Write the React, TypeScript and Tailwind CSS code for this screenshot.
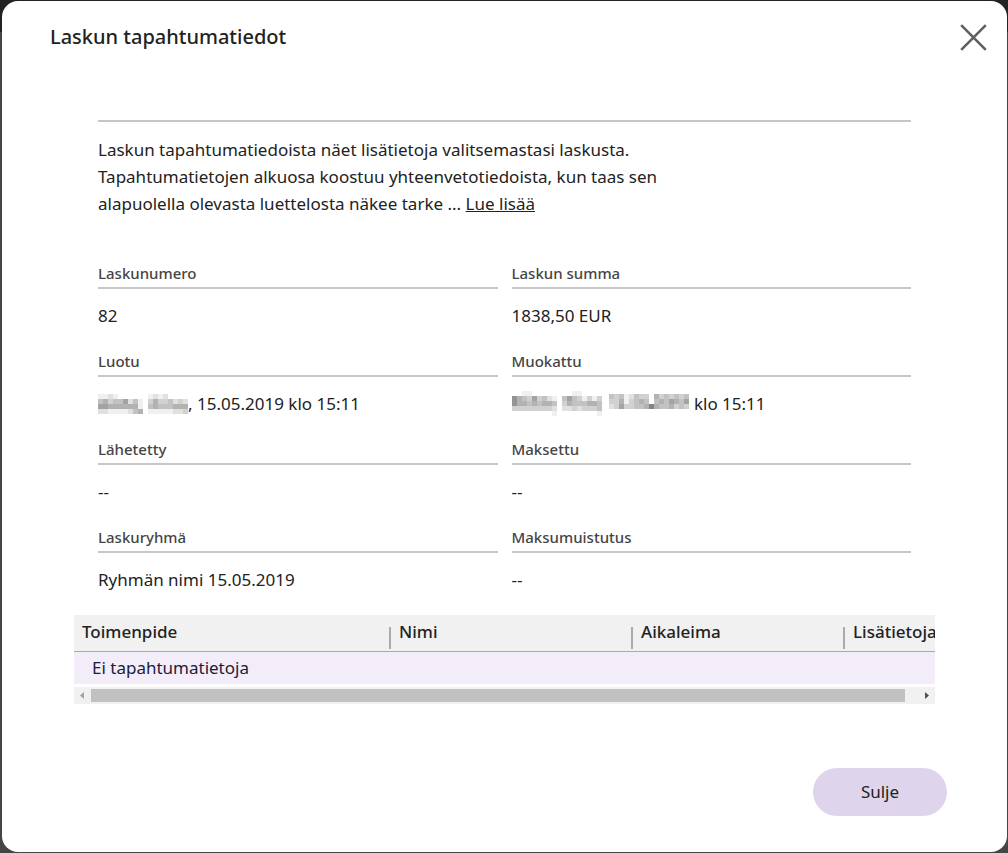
type Block = { x: number; y: number; rows: string[] };
type Mask = { width: number; height: number; blocks: Block[] };
type Field = { label: string; mask?: Mask; value: string };

/* Mosaic covers for personal data: one digit per 5px cell, 0 is clear and 9 is darkest. */
const CREATED_MASK: Mask = {
  width: 90,
  height: 20,
  blocks: [
    { x: 0, y: 0, rows: ['112100000', '453446241', '665555551', '221111245'] },
    { x: 50, y: 0, rows: ['12120000', '35334232', '45444555', '11111223'] },
  ],
};

const EDITED_MASK: Mask = {
  width: 178,
  height: 25,
  blocks: [
    { x: 0, y: 0, rows: ['001100000', '754363421', '755454554', '333333332', '000000001'] },
    { x: 50, y: 0, rows: ['00110000', '46431313', '35444554', '22323334', '00000001'] },
    { x: 97, y: 3, rows: ['4341243305343434', '3351345404546546', '2363344585445343'] },
  ],
};

const FIELDS: Field[] = [
  { label: 'Laskunumero', value: '82' },
  { label: 'Laskun summa', value: '1838,50 EUR' },
  { label: 'Luotu', mask: CREATED_MASK, value: ', 15.05.2019 klo 15:11' },
  { label: 'Muokattu', mask: EDITED_MASK, value: ' klo 15:11' },
  { label: 'Lähetetty', value: '--' },
  { label: 'Maksettu', value: '--' },
  { label: 'Laskuryhmä', value: 'Ryhmän nimi 15.05.2019' },
  { label: 'Maksumuistutus', value: '--' },
];

function Mosaic({ mask }: { mask: Mask }) {
  return (
    <svg
      width={mask.width}
      height={mask.height}
      shapeRendering="crispEdges"
      className="inline-block shrink-0"
      aria-hidden="true"
    >
      {mask.blocks.map((block) =>
        block.rows.map((row, y) =>
          row.split('').map((level, x) => (
            <rect
              key={`${block.x}-${x}-${y}`}
              x={block.x + x * 5}
              y={block.y + y * 5}
              width={5}
              height={5}
              fill="#000"
              fillOpacity={Number(level) * 0.06}
            />
          )),
        ),
      )}
    </svg>
  );
}

function HorizontalScrollbar() {
  return (
    <div className="mt-[3px] flex h-[17px] items-center bg-[#f1f1f1]" aria-hidden="true">
      <svg width="17" height="17" viewBox="0 0 17 17">
        <path d="M10 5v7L6 8.5z" fill="#a3a3a3" />
      </svg>
      <div className="flex-1 pr-[13px]">
        <div className="h-[13px] bg-[#c1c1c1]" />
      </div>
      <svg width="17" height="17" viewBox="0 0 17 17">
        <path d="M7 5v7l4-3.5z" fill="#505050" />
      </svg>
    </div>
  );
}

function HeaderCell({ children, last }: { children: string; last?: boolean }) {
  return (
    <th scope="col" className="h-9 border-b border-[#aaaaaa] p-0 text-left font-medium">
      <div className="flex h-[35px] items-end justify-between pb-px">
        <span className="pb-1 pl-2 leading-[27px]">{children}</span>
        {!last && <span className="h-[22px] w-[2px] shrink-0 bg-[#aaaaaa]" />}
      </div>
    </th>
  );
}

export default function App() {
  return (
    <div
      className={
        'flex min-h-screen flex-col bg-[linear-gradient(#222222_32px,#454545_32px)] pt-px pr-px pb-px pl-[2px] text-[17px] leading-[27px] text-[#222222] font-["Noto_Sans","Open_Sans",sans-serif]'
      }
    >
      <div role="dialog" aria-labelledby="dialog-title" className="flex flex-1 flex-col rounded-2xl bg-white">
        <header className="flex items-start justify-between pt-[23px] pr-5 pl-12">
          <h1 id="dialog-title" className="text-xl leading-[26px] font-medium">
            Laskun tapahtumatiedot
          </h1>
          <button type="button" aria-label="Sulje ikkuna" className="cursor-pointer">
            <svg width="27" height="27" viewBox="0 0 27 27" fill="none" stroke="#606060" strokeWidth="2.6">
              <path d="M1.2 1.2l24.6 24.6M25.8 1.2L1.2 25.8" />
            </svg>
          </button>
        </header>

        <main className="mt-[69px] px-[72px]">
          <div className="px-6">
            <div className="border-t-2 border-[#c6c6c6] pt-[14px]">
              <p className="max-w-[600px]">
                Laskun tapahtumatiedoista näet lisätietoja valitsemastasi laskusta.
                <br />
                Tapahtumatietojen alkuosa koostuu yhteenvetotiedoista, kun taas sen
                <br />
                alapuolella olevasta luettelosta näkee tarke ...{' '}
                <a href="#lue-lisaa" className="underline">
                  Lue lisää
                </a>
              </p>
            </div>

            <dl className="mt-[42px] grid grid-cols-2 gap-x-[14px]">
              {FIELDS.map((field) => (
                <div key={field.label} className="h-[88px]">
                  <dt className="border-b-2 border-[#c6c6c6] pt-px text-[15px] leading-[27px] font-medium text-[#454545]">
                    {field.label}
                  </dt>
                  <dd className="mt-[13px] flex items-center whitespace-pre">
                    {field.mask && <Mosaic mask={field.mask} />}
                    {field.value}
                  </dd>
                </div>
              ))}
            </dl>
          </div>

          <div className="mt-1 overflow-hidden">
            <table className="w-[875px] table-fixed border-collapse">
              <colgroup>
                <col className="w-[317px]" />
                <col className="w-[242px]" />
                <col className="w-[212px]" />
                <col />
              </colgroup>
              <thead className="bg-[#f1f1f1]">
                <tr>
                  <HeaderCell>Toimenpide</HeaderCell>
                  <HeaderCell>Nimi</HeaderCell>
                  <HeaderCell>Aikaleima</HeaderCell>
                  <HeaderCell last>Lisätietoja</HeaderCell>
                </tr>
              </thead>
              <tbody>
                <tr className="bg-[#f3ecf9]">
                  <td colSpan={4} className="h-[33px] p-0 pl-[18px] text-[#1c1c3a]">
                    Ei tapahtumatietoja
                  </td>
                </tr>
              </tbody>
            </table>
          </div>
          <HorizontalScrollbar />
        </main>

        <footer className="mt-auto flex justify-end pr-[60px] pb-9">
          <button type="button" className="h-12 w-[134px] cursor-pointer rounded-full bg-[#ded4eb] pb-[2px]">
            Sulje
          </button>
        </footer>
      </div>
    </div>
  );
}
